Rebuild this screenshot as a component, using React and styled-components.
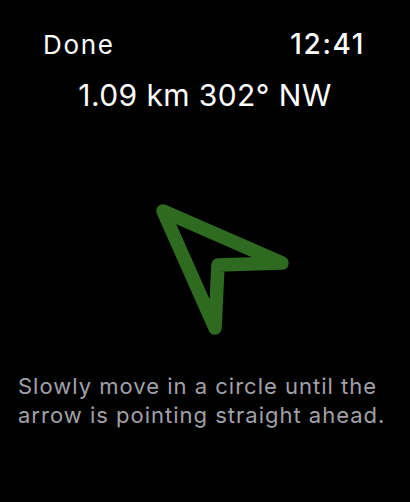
import styled, { createGlobalStyle } from 'styled-components'

const GlobalStyle = createGlobalStyle`
  html, body {
    margin: 0;
    padding: 0;
    background: #000000;
  }
  body {
    font-family: Inter, "Noto Sans", sans-serif;
    -webkit-font-smoothing: antialiased;
  }
`

const Screen = styled.div`
  width: 410px;
  height: 502px;
  background: #000000;
  color: #ffffff;
  display: flex;
  flex-direction: column;
  overflow: hidden;
`

const TopBar = styled.div`
  display: flex;
  justify-content: space-between;
  align-items: baseline;
  padding: 28px 45px 0 43px;
  line-height: 32px;
`

const DoneButton = styled.span`
  font-size: 26px;
  font-weight: 400;
  letter-spacing: 1.7px;
`

const Clock = styled.span`
  font-size: 28px;
  font-weight: 500;
  letter-spacing: 1.6px;
`

const Heading = styled.div`
  margin-top: 16px;
  text-align: center;
  font-size: 30px;
  line-height: 36px;
  font-weight: 400;
  letter-spacing: 0.4px;
`

const ArrowWrap = styled.div`
  display: flex;
  justify-content: center;
  margin-top: 78px;
`

const Hint = styled.p`
  margin: 31px 0 0;
  padding: 0 18px;
  font-size: 22px;
  line-height: 29px;
  color: #a1a1a8;
  letter-spacing: 1px;
`

function Arrow() {
  return (
    <svg width="190" height="150" viewBox="0 0 190 150" xmlns="http://www.w3.org/2000/svg">
      <path
        d="M53 20 L172 72 L108 74 L105 137 Z"
        fill="none"
        stroke="#2e6a20"
        strokeWidth="13.5"
        strokeLinejoin="round"
      />
    </svg>
  )
}

export default function App() {
  return (
    <>
      <GlobalStyle />
      <Screen>
        <TopBar>
          <DoneButton>Done</DoneButton>
          <Clock>12:41</Clock>
        </TopBar>
        <Heading>1.09 km 302° NW</Heading>
        <ArrowWrap>
          <Arrow />
        </ArrowWrap>
        <Hint>Slowly move in a circle until the arrow is pointing straight ahead.</Hint>
      </Screen>
    </>
  )
}
